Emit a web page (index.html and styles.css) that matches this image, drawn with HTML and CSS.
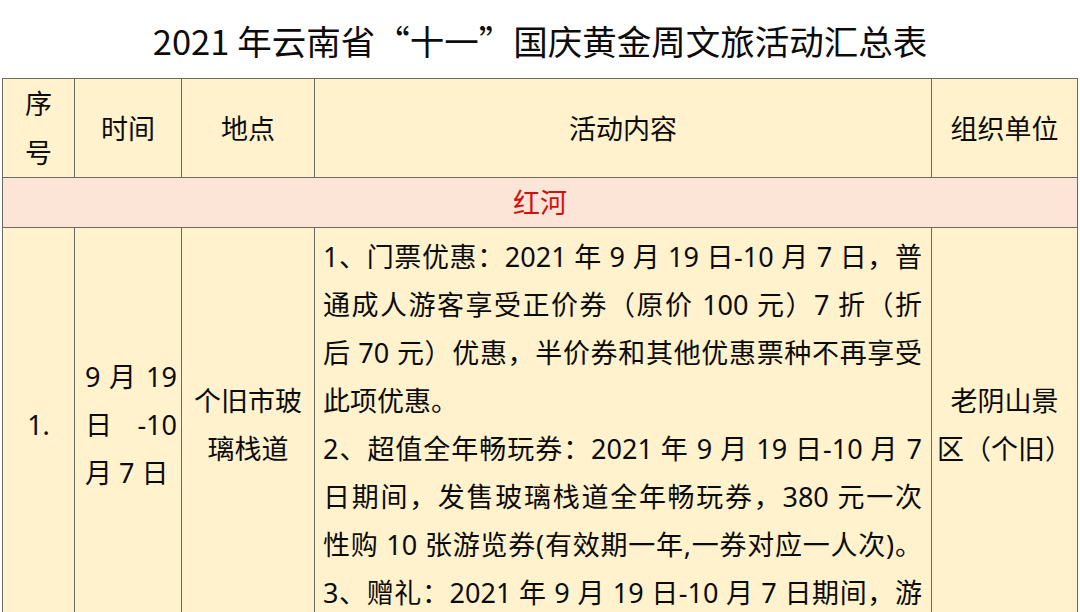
FILE: index.html
```html
<!DOCTYPE html>
<html lang="zh-CN">
<head>
<meta charset="utf-8">
<title>2021 年云南省“十一”国庆黄金周文旅活动汇总表</title>
<link rel="stylesheet" href="styles.css">
</head>
<body>
<h1 class="title">2021 年云南省“十一”国庆黄金周文旅活动汇总表</h1>
<table class="sheet">
  <colgroup>
    <col class="c-no">
    <col class="c-time">
    <col class="c-place">
    <col class="c-content">
    <col class="c-org">
  </colgroup>
  <thead>
    <tr class="head-row">
      <th>序<br>号</th>
      <th>时间</th>
      <th>地点</th>
      <th>活动内容</th>
      <th>组织单位</th>
    </tr>
  </thead>
  <tbody>
    <tr class="region-row">
      <td colspan="5">红河</td>
    </tr>
    <tr class="data-row">
      <td class="center">1.</td>
      <td class="time">
        <span class="ln just">9 月 19</span>
        <span class="ln just">日 -10</span>
        <span class="ln">月 7 日</span>
      </td>
      <td class="center">个旧市玻<br>璃栈道</td>
      <td class="content">
        <span class="ln just">1、门票优惠：2021 年 9 月 19 日-10 月 7 日，普</span>
        <span class="ln just">通成人游客享受正价券（原价 100 元）7 折（折</span>
        <span class="ln just">后 70 元）优惠，半价券和其他优惠票种不再享受</span>
        <span class="ln">此项优惠。</span>
        <span class="ln just">2、超值全年畅玩券：2021 年 9 月 19 日-10 月 7</span>
        <span class="ln just">日期间，发售玻璃栈道全年畅玩券，380 元一次</span>
        <span class="ln just">性购 10 张游览券(有效期一年,一券对应一人次)。</span>
        <span class="ln just">3、赠礼：2021 年 9 月 19 日-10 月 7 日期间，游</span>
      </td>
      <td class="center">老阴山景<br>区（个旧）</td>
    </tr>
  </tbody>
</table>
</body>
</html>
```

FILE: styles.css
```css
html, body {
  margin: 0;
  padding: 0;
  background: #ffffff;
}

body {
  font-family: "Noto Sans", "Noto Sans CJK SC", sans-serif;
  color: #0c0c0c;
  width: 1080px;
  overflow: hidden;
}

.title {
  margin: 0;
  padding-top: 2px;
  height: 76px;
  line-height: 76px;
  text-align: center;
  font-family: "Noto Sans CJK SC", sans-serif;
  font-weight: 400;
  font-size: 34.5px;
  color: #0c0c0c;
}

.sheet {
  margin-left: 2px;
  width: 1075px;
  table-layout: fixed;
  border-collapse: collapse;
  font-size: 27px;
}

.c-no { width: 72px; }
.c-time { width: 107px; }
.c-place { width: 133px; }
.c-content { width: 617px; }
.c-org { width: 146px; }

.sheet th,
.sheet td {
  border: 1px solid #6b6a60;
  padding: 0;
  vertical-align: middle;
}

.head-row th {
  height: 97px;
  background: #fff2cc;
  font-weight: 400;
  line-height: 49px;
  text-align: center;
}

.region-row td {
  height: 49px;
  background: #fce4d6;
  color: #d0100e;
  line-height: 49px;
  text-align: center;
}

.data-row td {
  background: #fff2cc;
  line-height: 48px;
}

.data-row .center {
  text-align: center;
}

.data-row .time {
  padding: 0 4px 0 10px;
}

.data-row .content {
  padding: 5px 9px 5px 8px;
  vertical-align: top;
}

.ln {
  display: block;
  text-align: left;
  white-space: nowrap;
}

.ln.just {
  white-space: normal;
  text-align: justify;
  text-align-last: justify;
}
```
